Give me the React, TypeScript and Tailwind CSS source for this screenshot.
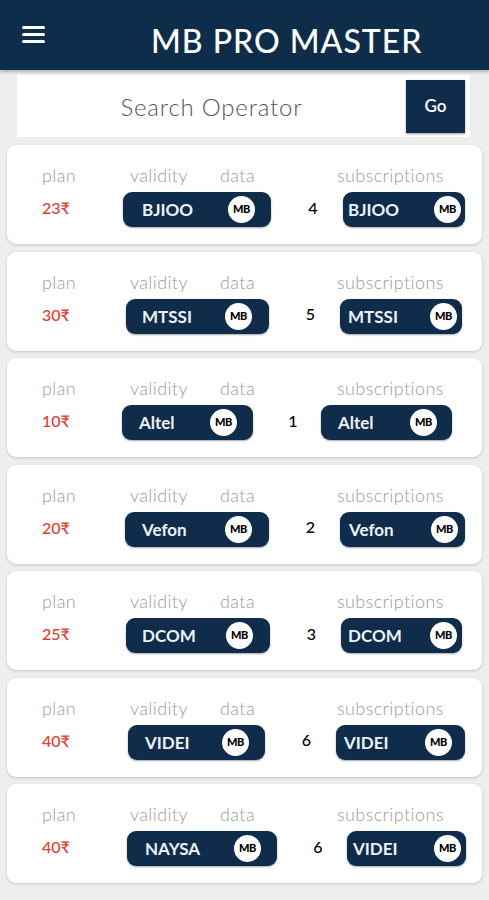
import React from 'react';

type Plan = {
  price: string;
  count: string;
  op1: string;
  op2: string;
  // pill boxes, written out in full so tailwind picks them up
  p1: string;
  p1Text: string;
  p1Badge: string;
  num: string;
  p2: string;
  p2Text: string;
  p2Badge: string;
};

const plans: Plan[] = [
  {
    price: '23₹', count: '4', op1: 'BJIOO', op2: 'BJIOO',
    p1: 'ml-[81px] w-[148px]', p1Text: 'pl-[19px]', p1Badge: 'mr-[16px]',
    num: 'w-[72px]', p2: 'w-[122px]', p2Text: 'pl-[5px]', p2Badge: 'mr-[4px]',
  },
  {
    price: '30₹', count: '5', op1: 'MTSSI', op2: 'MTSSI',
    p1: 'ml-[84px] w-[143px]', p1Text: 'pl-[16px]', p1Badge: 'mr-[17px]',
    num: 'w-[71px]', p2: 'w-[122px]', p2Text: 'pl-[8px]', p2Badge: 'mr-[5px]',
  },
  {
    price: '10₹', count: '1', op1: 'Altel', op2: 'Altel',
    p1: 'ml-[80px] w-[131px]', p1Text: 'pl-[17px]', p1Badge: 'mr-[16px]',
    num: 'w-[68px]', p2: 'w-[131px]', p2Text: 'pl-[17px]', p2Badge: 'mr-[15px]',
  },
  {
    price: '20₹', count: '2', op1: 'Vefon', op2: 'Vefon',
    p1: 'ml-[83px] w-[144px]', p1Text: 'pl-[17px]', p1Badge: 'mr-[17px]',
    num: 'w-[71px]', p2: 'w-[125px]', p2Text: 'pl-[9px]', p2Badge: 'mr-[7px]',
  },
  {
    price: '25₹', count: '3', op1: 'DCOM', op2: 'DCOM',
    p1: 'ml-[84px] w-[144px]', p1Text: 'pl-[16px]', p1Badge: 'mr-[17px]',
    num: 'w-[71px]', p2: 'w-[121px]', p2Text: 'pl-[7px]', p2Badge: 'mr-[5px]',
  },
  {
    price: '40₹', count: '6', op1: 'VIDEI', op2: 'VIDEI',
    p1: 'ml-[86px] w-[137px]', p1Text: 'pl-[17px]', p1Badge: 'mr-[16px]',
    num: 'w-[71px]', p2: 'w-[129px]', p2Text: 'pl-[8px]', p2Badge: 'mr-[13px]',
  },
  {
    price: '40₹', count: '6', op1: 'NAYSA', op2: 'VIDEI',
    p1: 'ml-[85px] w-[150px]', p1Text: 'pl-[18px]', p1Badge: 'mr-[16px]',
    num: 'w-[70px]', p2: 'w-[119px]', p2Text: 'pl-[6px]', p2Badge: 'mr-[5px]',
  },
];

function MbBadge({ className }: { className: string }) {
  return (
    <span
      className={`w-[27px] h-[27px] rounded-full bg-white flex items-center justify-center text-[11px] font-black text-black tracking-[-0.5px] ${className}`}
    >
      MB
    </span>
  );
}

function OperatorPill({ name, box, text, badge }: { name: string; box: string; text: string; badge: string }) {
  return (
    <div className={`h-[35px] rounded-[9px] bg-[#0f2d4a] flex items-center justify-between shadow-[0_1px_2px_rgba(0,0,0,0.35)] ${box}`}>
      <span className={`text-[17px] font-bold text-[#eef2f6] leading-none ${text}`}>{name}</span>
      <MbBadge className={badge} />
    </div>
  );
}

function PlanCard({ plan }: { plan: Plan }) {
  return (
    <div className="h-[99px] mx-[7px] bg-white rounded-[9px] shadow-[0_1px_3px_rgba(0,0,0,0.18)] flex flex-col pl-[35px]">
      {/* labels */}
      <div className="flex items-center mt-[19px] h-[22px] text-[18px] font-light text-[#9b9b9b] leading-none tracking-[0.4px]">
        <span className="w-[88px]">plan</span>
        <span className="w-[90px]">validity</span>
        <span className="w-[117px]">data</span>
        <span>subscriptions</span>
      </div>

      {/* values */}
      <div className="flex items-center mt-[6px] h-[35px]">
        <span className="w-[0px] whitespace-nowrap text-[16px] font-medium text-[#e53a2f] -mt-[3px]">
          {plan.price}
        </span>
        <OperatorPill name={plan.op1} box={plan.p1} text={plan.p1Text} badge={plan.p1Badge} />
        <span className={`text-[16px] font-medium text-black text-center pl-[12px] -mt-[4px] ${plan.num}`}>{plan.count}</span>
        <OperatorPill name={plan.op2} box={plan.p2} text={plan.p2Text} badge={plan.p2Badge} />
      </div>
    </div>
  );
}

export default function App() {
  return (
    <div className="w-[489px] h-[900px] bg-[#eeeeee] overflow-hidden font-['Lato',sans-serif]">
      {/* Top Header */}
      <div className="h-[70px] bg-[#0e2d4a] flex items-start relative shadow-[0_2px_3px_rgba(0,0,0,0.25)]">
        <div className="mt-[26px] ml-[22px] w-[23px] flex flex-col gap-[4px]">
          <div className="h-[3px] bg-white rounded-sm" />
          <div className="h-[3px] bg-white rounded-sm" />
          <div className="h-[3px] bg-white rounded-sm" />
        </div>
        <h1 className="ml-[106px] mt-[21px] text-[32px] font-medium text-white tracking-[1px] leading-[40px]">
          MB PRO MASTER
        </h1>
      </div>

      {/* Search */}
      <div className="mt-[5px] ml-[17px] w-[453px] h-[62px] bg-white flex items-center">
        <div className="flex-1 text-center text-[24px] font-light text-[#555555] tracking-[0.8px] mt-[1px]">Search Operator</div>
        <button className="w-[59px] h-[53px] mr-[5px] bg-[#0f2d4a] text-white text-[17px] font-semibold shadow-[0_1px_2px_rgba(0,0,0,0.4)]">
          Go
        </button>
      </div>

      {/* Plans */}
      <div className="mt-[8px] flex flex-col gap-[7.5px]">
        {plans.map((p, i) => (
          <PlanCard key={i} plan={p} />
        ))}
      </div>
    </div>
  );
}
